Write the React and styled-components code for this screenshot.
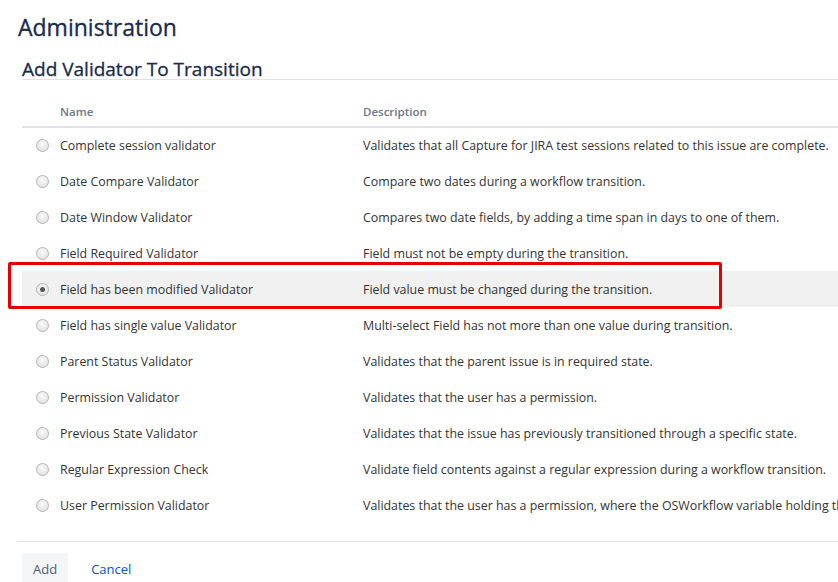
import React from "react";
import styled, { createGlobalStyle } from "styled-components";

const GlobalStyle = createGlobalStyle`
  html, body {
    margin: 0;
    padding: 0;
    background: #fff;
    font-family: "Open Sans", "Noto Sans", sans-serif;
    color: #172b4d;
    overflow: hidden;
  }
`;

const Page = styled.div`
  position: relative;
  width: 838px;
  height: 582px;
  overflow: hidden;
`;

const Title = styled.h1`
  margin: 0;
  padding: 12px 0 0 18px;
  font-size: 23px;
  font-weight: 500;
  line-height: 30px;
  color: #172b4d;
  -webkit-text-stroke: 0.3px #172b4d;
`;

const Section = styled.div`
  margin-left: 22px;
`;

const SubTitle = styled.h2`
  margin: 0;
  padding-top: 17px;
  font-size: 19px;
  font-weight: 500;
  line-height: 20px;
  border-bottom: 1px solid #dfe1e6;
  color: #172b4d;
  -webkit-text-stroke: 0.3px #172b4d;
`;

const Table = styled.table`
  width: 100%;
  border-collapse: collapse;
  margin-top: 24px;
  font-size: 12.4px;
  table-layout: fixed;
`;

const HeadCell = styled.th`
  text-align: left;
  font-weight: 600;
  font-size: 11.5px;
  color: #6b778c;
  height: 22px;
  padding: 0;
  vertical-align: top;
  border-bottom: 2px solid #dfe1e6;
  width: ${(p) => p.$w || "auto"};
`;

const Row = styled.tr`
  height: 36px;
  background: ${(p) => (p.$active ? "#f0f0f0" : "transparent")};
`;

const Cell = styled.td`
  padding: 0;
  white-space: nowrap;
  overflow: hidden;
  color: #333;
  vertical-align: middle;
`;

const Radio = styled.span`
  display: block;
  width: 11px;
  height: 11px;
  margin-left: 14px;
  border-radius: 50%;
  border: 1px solid #b5b5b5;
  background: radial-gradient(circle at 50% 35%, #fafafa, #dcdcdc);
  position: relative;
  &::after {
    content: "";
    display: ${(p) => (p.$checked ? "block" : "none")};
    position: absolute;
    left: 3px;
    top: 3px;
    width: 5px;
    height: 5px;
    border-radius: 50%;
    background: #555;
  }
`;

const Footer = styled.div`
  margin: 18px 0 0 17px;
  border-top: 1px solid #dfe1e6;
  padding: 11px 0 0 5px;
  display: flex;
  align-items: center;
  gap: 23px;
`;

const Button = styled.button`
  border: none;
  background: #f4f5f7;
  border-radius: 3px;
  padding: 0 11px;
  height: 32px;
  font-family: inherit;
  font-size: 13px;
  color: #505f79;
`;

const LinkButton = styled.a`
  font-size: 13px;
  color: #0052cc;
  text-decoration: none;
`;

const Highlight = styled.div`
  position: absolute;
  left: 8px;
  top: 262px;
  width: 708px;
  height: 41px;
  border: 3px solid #e50000;
  border-radius: 2px;
  pointer-events: none;
`;

const validators = [
  ["Complete session validator", "Validates that all Capture for JIRA test sessions related to this issue are complete."],
  ["Date Compare Validator", "Compare two dates during a workflow transition."],
  ["Date Window Validator", "Compares two date fields, by adding a time span in days to one of them."],
  ["Field Required Validator", "Field must not be empty during the transition."],
  ["Field has been modified Validator", "Field value must be changed during the transition."],
  ["Field has single value Validator", "Multi-select Field has not more than one value during transition."],
  ["Parent Status Validator", "Validates that the parent issue is in required state."],
  ["Permission Validator", "Validates that the user has a permission."],
  ["Previous State Validator", "Validates that the issue has previously transitioned through a specific state."],
  ["Regular Expression Check", "Validate field contents against a regular expression during a workflow transition."],
  ["User Permission Validator", "Validates that the user has a permission, where the OSWorkflow variable holding the username is specified."],
];

export default function App() {
  const selected = 4;
  return (
    <Page>
      <GlobalStyle />
      <Title>Administration</Title>
      <Section>
        <SubTitle>Add Validator To Transition</SubTitle>
        <Table>
          <thead>
            <tr>
              <HeadCell $w="38px"></HeadCell>
              <HeadCell $w="303px">Name</HeadCell>
              <HeadCell>Description</HeadCell>
            </tr>
          </thead>
          <tbody>
            {validators.map(([name, desc], i) => (
              <Row key={name} $active={i === selected}>
                <Cell><Radio $checked={i === selected} /></Cell>
                <Cell>{name}</Cell>
                <Cell>{desc}</Cell>
              </Row>
            ))}
          </tbody>
        </Table>
      </Section>
      <Footer>
        <Button>Add</Button>
        <LinkButton href="#">Cancel</LinkButton>
      </Footer>
      <Highlight />
    </Page>
  );
}
